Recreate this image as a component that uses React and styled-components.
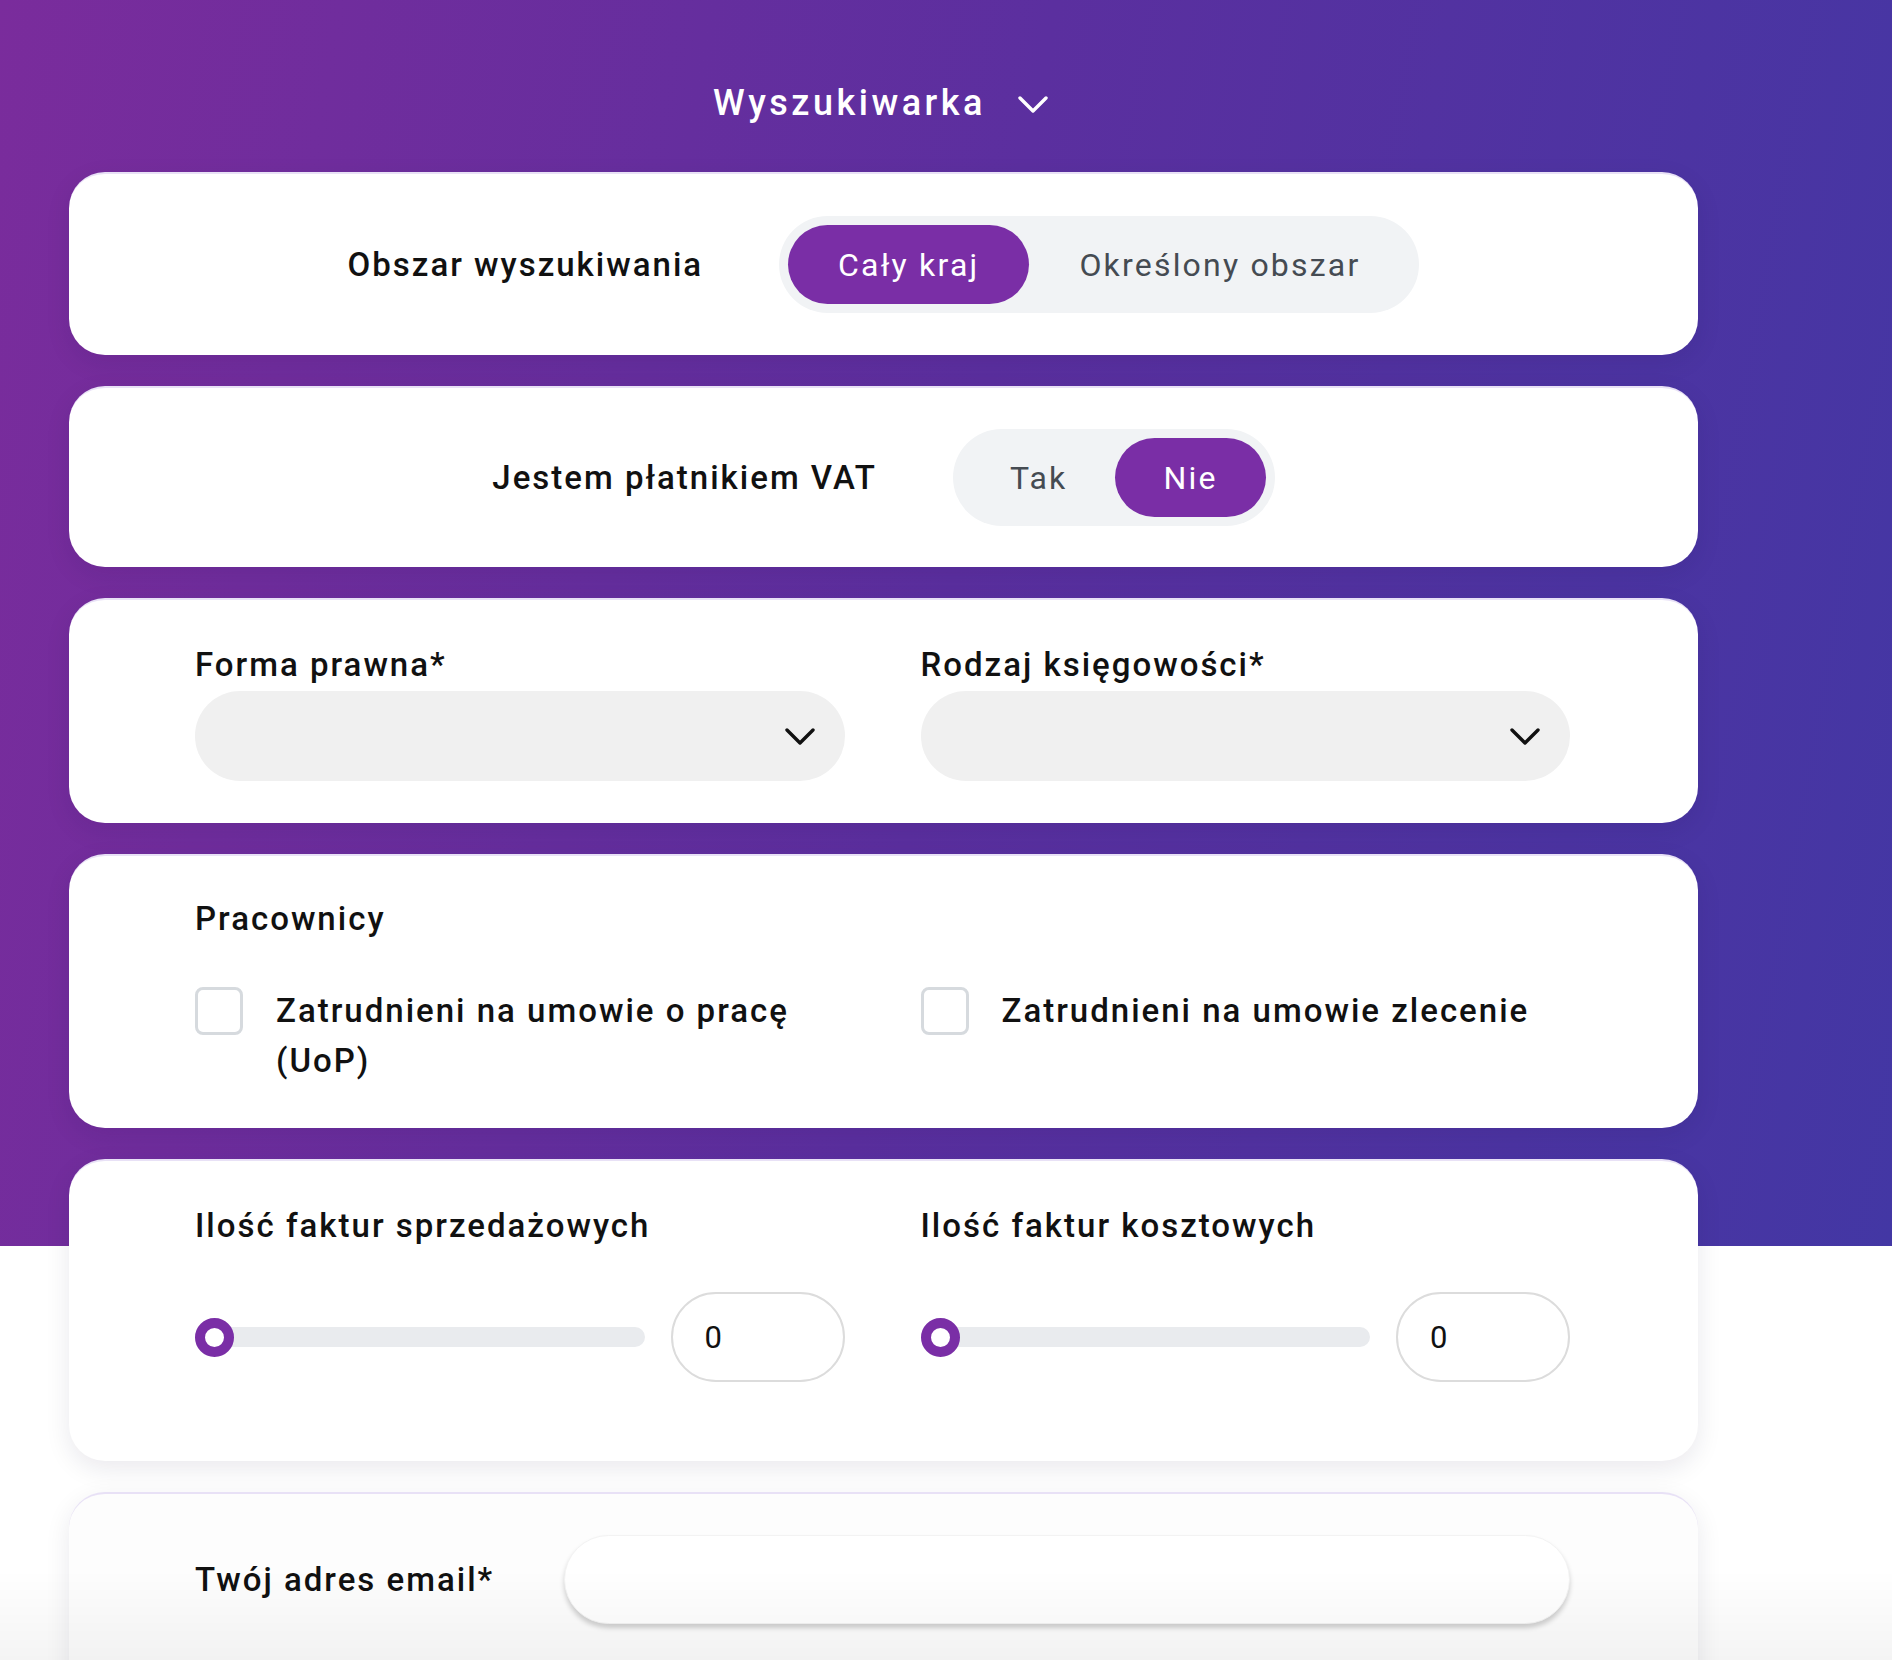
import styled, { createGlobalStyle } from "styled-components";

const GlobalStyle = createGlobalStyle`
  * { box-sizing: border-box; }
  body {
    margin: 0;
    font-family: Roboto, "Noto Sans", sans-serif;
    color: #111;
    background: #fff;
  }
`;

const Page = styled.div`
  min-height: 1660px;
  background:
    linear-gradient(100deg, #7a2c9c 0%, #5b2f9f 50%, #4337a4 100%) top left / 100% 1246px no-repeat,
    #fff;
  overflow: hidden;
`;

const Container = styled.div`
  width: 1629px;
  margin-left: 69px;
`;

const Header = styled.div`
  height: 172px;
  padding-top: 76px;
  display: flex;
  justify-content: center;
  align-items: flex-start;
  gap: 32px;
  padding-right: 6px;
  color: #fff;
`;

const Title = styled.h1`
  margin: 0;
  font-size: 36px;
  line-height: 54px;
  font-weight: 500;
  letter-spacing: 3.5px;
`;

const Chevron = styled.svg`
  flex: none;
  width: 30px;
  height: 17px;
  margin-top: ${(p) => p.$top || 0}px;
  fill: none;
  stroke: currentColor;
  stroke-width: 3.4;
  stroke-linecap: round;
  stroke-linejoin: round;
`;

const ChevronDown = ({ top }) => (
  <Chevron $top={top} viewBox="0 0 30 17">
    <path d="M2 2 L15 15 L28 2" />
  </Chevron>
);

const Card = styled.section`
  background: #fff;
  border-radius: 36px;
  margin-bottom: 31px;
  box-shadow: 0 8px 26px rgba(20, 10, 60, 0.09);
  border-top: 2px solid rgba(230, 222, 245, 0.9);
`;

const InlineCard = styled(Card)`
  height: ${(p) => p.$height}px;
  display: flex;
  align-items: center;
  justify-content: center;
  gap: 76px;
`;

const Label = styled.div`
  font-size: 33px;
  line-height: 40px;
  font-weight: 500;
  letter-spacing: 2px;
  color: #111;
  white-space: nowrap;
`;

const Toggle = styled.div`
  display: flex;
  padding: 9px;
  border-radius: 999px;
  background: #f1f3f5;
`;

const ToggleOption = styled.button`
  height: 79px;
  padding: 0 ${(p) => (p.$narrow ? 48 : 50)}px;
  border: none;
  border-radius: 999px;
  font-family: inherit;
  font-size: 32px;
  letter-spacing: 2.2px;
  background: ${(p) => (p.$active ? "#7a2ea6" : "transparent")};
  color: ${(p) => (p.$active ? "#fff" : "#454b52")};
  cursor: pointer;
`;

const GridCard = styled(Card)`
  padding: ${(p) => p.$pad};
`;

const Columns = styled.div`
  display: grid;
  grid-template-columns: 1fr 1fr;
  column-gap: 76px;
`;

const Field = styled.div`
  display: flex;
  flex-direction: column;
  gap: ${(p) => p.$gap || 6}px;
`;

const Select = styled.div`
  height: 90px;
  border-radius: 999px;
  background: #f0f0f0;
  display: flex;
  align-items: center;
  justify-content: flex-end;
  padding-right: 30px;
  color: #111;
`;

const CheckRow = styled.label`
  display: flex;
  align-items: flex-start;
  gap: 33px;
  cursor: pointer;
`;

const CheckBox = styled.span`
  flex: none;
  width: 48px;
  height: 48px;
  margin-top: 1px;
  border: 3px solid #d6dade;
  border-radius: 8px;
  background: #fff;
`;

const CheckText = styled(Label)`
  line-height: 50px;
  white-space: normal;
`;

const SliderRow = styled.div`
  display: flex;
  align-items: center;
  gap: 26px;
`;

const Track = styled.div`
  position: relative;
  flex: 1;
  height: 20px;
  border-radius: 10px;
  background: #e9ebee;
`;

const Thumb = styled.span`
  position: absolute;
  left: 0;
  top: 50%;
  width: 39px;
  height: 39px;
  margin-top: -19.5px;
  border-radius: 50%;
  border: 10px solid #7a2ea6;
  background: #fff;
`;

const NumberBox = styled.div`
  width: 174px;
  height: 90px;
  border: 2px solid #dcdcdc;
  border-radius: 999px;
  display: flex;
  align-items: center;
  padding-left: 32px;
  font-size: 31px;
  color: #111;
`;

const EmailCard = styled(Card)`
  height: 260px;
  margin-bottom: 0;
  padding: 41px 128px 0 126px;
  display: flex;
  align-items: flex-start;
  gap: 70px;
  background: #fdfdfd;
`;

const EmailLabel = styled(Label)`
  line-height: 89px;
`;

const EmailInput = styled.div`
  flex: 1;
  height: 89px;
  border-radius: 999px;
  background: #fff;
  border: 1px solid #f3f3f3;
  box-shadow: 0 4px 5px rgba(0, 0, 0, 0.18);
`;

const BottomFade = styled.div`
  position: fixed;
  left: 0;
  right: 0;
  bottom: 0;
  height: 90px;
  pointer-events: none;
  background: linear-gradient(to bottom, rgba(0, 0, 0, 0), rgba(0, 0, 0, 0.045));
`;

const SliderField = ({ label }) => (
  <Field $gap={46}>
    <Label>{label}</Label>
    <SliderRow>
      <Track>
        <Thumb />
      </Track>
      <NumberBox>0</NumberBox>
    </SliderRow>
  </Field>
);

export default function App() {
  return (
    <Page>
      <GlobalStyle />
      <Container>
        <Header>
          <Title>Wyszukiwarka</Title>
          <ChevronDown top={20} />
        </Header>

        <InlineCard $height={183}>
          <Label>Obszar wyszukiwania</Label>
          <Toggle>
            <ToggleOption $active>Cały kraj</ToggleOption>
            <ToggleOption>Określony obszar</ToggleOption>
          </Toggle>
        </InlineCard>

        <InlineCard $height={181}>
          <Label>Jestem płatnikiem VAT</Label>
          <Toggle>
            <ToggleOption $narrow>Tak</ToggleOption>
            <ToggleOption $narrow $active>
              Nie
            </ToggleOption>
          </Toggle>
        </InlineCard>

        <GridCard $pad="45px 128px 42px 126px">
          <Columns>
            <Field>
              <Label>Forma prawna*</Label>
              <Select>
                <ChevronDown />
              </Select>
            </Field>
            <Field>
              <Label>Rodzaj księgowości*</Label>
              <Select>
                <ChevronDown />
              </Select>
            </Field>
          </Columns>
        </GridCard>

        <GridCard $pad="43px 128px 42px 126px">
          <Field $gap={47}>
            <Label>Pracownicy</Label>
            <Columns>
              <CheckRow>
                <CheckBox />
                <CheckText>Zatrudnieni na umowie o pracę (UoP)</CheckText>
              </CheckRow>
              <CheckRow>
                <CheckBox />
                <CheckText>Zatrudnieni na umowie zlecenie</CheckText>
              </CheckRow>
            </Columns>
          </Field>
        </GridCard>

        <GridCard $pad="45px 128px 79px 126px">
          <Columns>
            <SliderField label="Ilość faktur sprzedażowych" />
            <SliderField label="Ilość faktur kosztowych" />
          </Columns>
        </GridCard>

        <EmailCard>
          <EmailLabel>Twój adres email*</EmailLabel>
          <EmailInput />
        </EmailCard>
      </Container>
      <BottomFade />
    </Page>
  );
}
